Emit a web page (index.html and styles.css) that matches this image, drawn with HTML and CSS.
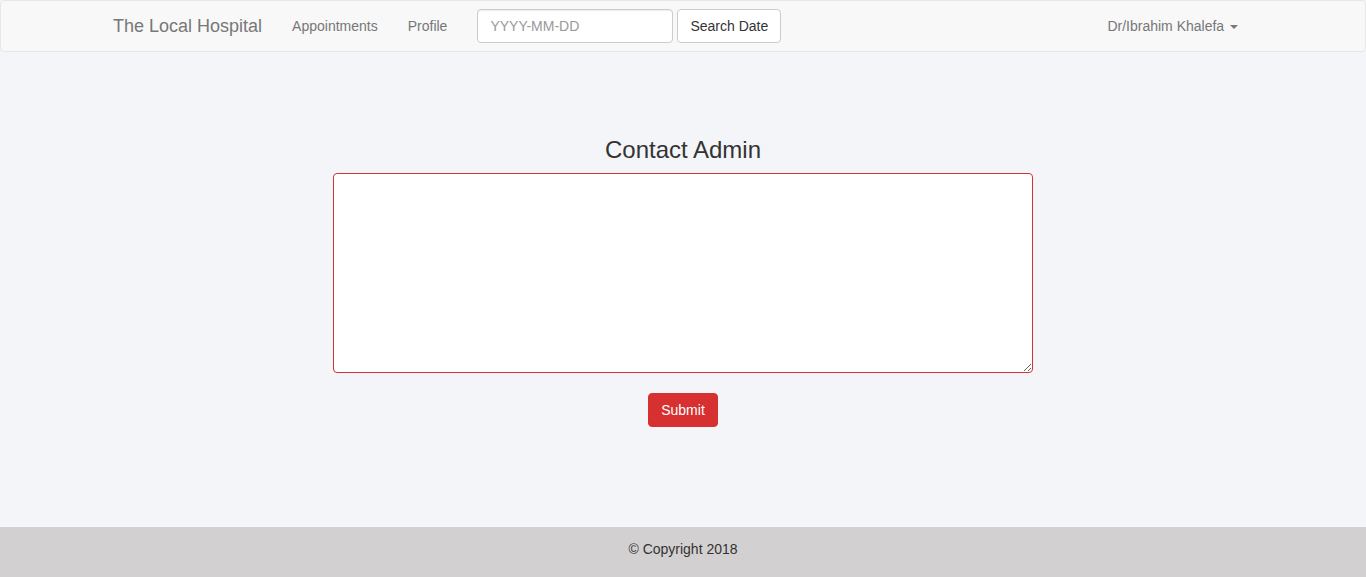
FILE: index.html
```html
<!DOCTYPE html>
<html lang="en">
<head>
<meta charset="utf-8">
<title>Contact Admin</title>
<link rel="stylesheet" href="styles.css">
</head>
<body>
<nav class="navbar">
  <div class="container">
    <a class="brand" href="#">The Local Hospital</a>
    <ul class="nav">
      <li><a href="#">Appointments</a></li>
      <li><a href="#">Profile</a></li>
    </ul>
    <form class="search">
      <input class="date-input" type="text" placeholder="YYYY-MM-DD">
      <button class="btn-default" type="button">Search Date</button>
    </form>
    <ul class="nav nav-right">
      <li><a href="#">Dr/Ibrahim Khalefa <span class="caret"></span></a></li>
    </ul>
  </div>
</nav>
<main class="main">
  <h2 class="title">Contact Admin</h2>
  <textarea class="message"></textarea>
  <button class="btn-submit" type="button">Submit</button>
</main>
<footer class="footer">© Copyright 2018</footer>
</body>
</html>
```
FILE: styles.css
```css
* { box-sizing: border-box; }
html, body { height: 100%; }
body {
  margin: 0;
  font-family: "Liberation Sans", Arial, sans-serif;
  font-size: 14px;
  line-height: 1.42857;
  color: #333;
  background: #f4f5f8;
  display: flex;
  flex-direction: column;
}
.navbar {
  height: 52px;
  background: #f8f8f8;
  border: 1px solid #e7e7e7;
  border-radius: 4px;
  flex: none;
}
.container {
  width: 1170px;
  margin: 0 auto;
  display: flex;
  align-items: center;
  height: 50px;
}
.brand {
  padding: 15px;
  font-size: 18px;
  line-height: 20px;
  color: #777;
  text-decoration: none;
}
.nav {
  list-style: none;
  margin: 0;
  padding: 0;
  display: flex;
}
.nav a {
  display: block;
  padding: 15px;
  line-height: 20px;
  color: #777;
  text-decoration: none;
}
.search {
  display: flex;
  gap: 4px;
  padding: 0 15px;
  margin-top: -1px;
}
.date-input {
  width: 196px;
  height: 34px;
  padding: 6px 12px;
  font: inherit;
  font-size: 14px;
  color: #555;
  background: #fff;
  border: 1px solid #ccc;
  border-radius: 4px;
  box-shadow: inset 0 1px 1px rgba(0,0,0,.075);
}
.date-input::placeholder { color: #999; }
.btn-default {
  height: 34px;
  padding: 7px 12px 5px;
  font: inherit;
  color: #333;
  background: #fff;
  border: 1px solid #ccc;
  border-radius: 4px;
}
.nav-right { margin-left: auto; margin-right: 15px; }
.caret {
  display: inline-block;
  width: 0;
  height: 0;
  margin-left: 2px;
  vertical-align: middle;
  border-top: 4px solid;
  border-left: 4px solid transparent;
  border-right: 4px solid transparent;
}
.main {
  flex: 1;
  display: flex;
  flex-direction: column;
  align-items: center;
  padding-top: 85px;
}
.title {
  margin: 0 0 10px;
  font-size: 24px;
  font-weight: normal;
  line-height: 1.1;
}
.message {
  width: 700px;
  height: 200px;
  border: 1px solid #d63031;
  border-radius: 4px;
  background: #fff;
  font: inherit;
  margin: 0;
}
.btn-submit {
  margin-top: 20px;
  width: 70px;
  height: 34px;
  padding: 7px 0 5px;
  font: inherit;
  color: #fff;
  background: #d63031;
  border: 1px solid #d63031;
  border-radius: 4px;
}
.footer {
  flex: none;
  height: 50px;
  background: #d3d0d1;
  text-align: center;
  line-height: 45px;
}
```
